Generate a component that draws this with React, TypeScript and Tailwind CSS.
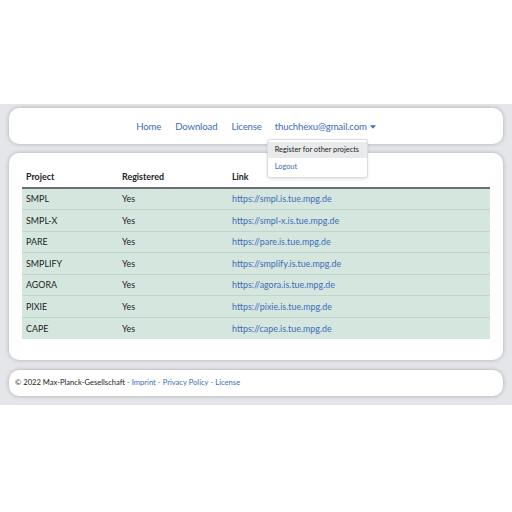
import React from "react";

const rows = [
  ["SMPL", "https://smpl.is.tue.mpg.de"],
  ["SMPL-X", "https://smpl-x.is.tue.mpg.de"],
  ["PARE", "https://pare.is.tue.mpg.de"],
  ["SMPLIFY", "https://smplify.is.tue.mpg.de"],
  ["AGORA", "https://agora.is.tue.mpg.de"],
  ["PIXIE", "https://pixie.is.tue.mpg.de"],
  ["CAPE", "https://cape.is.tue.mpg.de"],
];

export default function App() {
  return (
    <div className="w-[512px] h-[512px] bg-white text-[#222]" style={{ fontFamily: "Lato, 'Noto Sans', sans-serif" }}>
      <div className="h-[104px]" />
      <div className="bg-[#e5e6e9] px-[9px] pt-[4px] pb-[9px] flex flex-col">
        <div className="relative h-[36px] bg-white rounded-[10px] shadow-[0_0_4px_rgba(0,0,0,0.25)] flex items-center justify-center z-10">
          <div className="flex items-center text-[9.6px] tracking-[-0.15px] text-[#3d6db5] mt-[2px]">
            <span className="mr-[14px]">Home</span>
            <span className="mr-[14px]">Download</span>
            <span className="mr-[13px]">License</span>
            <span className="relative flex items-center">
              thuchhexu@gmail.com
              <svg width="6" height="4" viewBox="0 0 7 4" className="ml-[3px]"><path d="M0 0h7L3.5 4z" fill="#3d6db5" /></svg>
              <div className="absolute left-[-8px] top-[19px] w-[101px] bg-white border border-[#dcdcdc] rounded-[3px] shadow-[0_1px_3px_rgba(0,0,0,0.12)] py-[2px] text-[7.4px] tracking-normal whitespace-nowrap">
                <div className="bg-[#e9eaec] text-[#222] px-[7px] h-[16px] flex items-center">Register for other projects</div>
                <div className="text-[#3d6db5] px-[7px] h-[17px] flex items-center">Logout</div>
              </div>
            </span>
          </div>
        </div>
        <div className="mt-[9px] bg-white rounded-[10px] shadow-[0_0_4px_rgba(0,0,0,0.25)] px-[13px] pt-[14px] pb-[21px]">
          <table className="w-full text-[8.9px] border-collapse">
            <thead>
              <tr className="h-[21px] border-b-2 border-[#6b6f72]">
                <th className="text-left font-bold pl-[4px] w-[100px]">Project</th>
                <th className="text-left font-bold w-[110px]">Registered</th>
                <th className="text-left font-bold">Link</th>
              </tr>
            </thead>
            <tbody>
              {rows.map(([p, l], i) => (
                <tr key={p} className={"h-[21.6px] bg-[#d5e6df] " + (i < rows.length - 1 ? "border-b border-[#c3d4cd]" : "")}>
                  <td className="pl-[4px]">{p}</td>
                  <td>Yes</td>
                  <td className="text-[#3d6db5]">{l}</td>
                </tr>
              ))}
            </tbody>
          </table>
        </div>
        <div className="mt-[10px] h-[26px] bg-white rounded-[10px] shadow-[0_0_4px_rgba(0,0,0,0.25)] flex items-center px-[6px] text-[7.6px]">
          <span>© 2022 Max-Planck-Gesellschaft</span>
          <span className="text-[#777] mx-[2px]">-</span>
          <span className="text-[#3d6db5]">Imprint</span>
          <span className="text-[#777] mx-[2px]">-</span>
          <span className="text-[#3d6db5]">Privacy Policy</span>
          <span className="text-[#777] mx-[2px]">-</span>
          <span className="text-[#3d6db5]">License</span>
        </div>
      </div>
    </div>
  );
}
